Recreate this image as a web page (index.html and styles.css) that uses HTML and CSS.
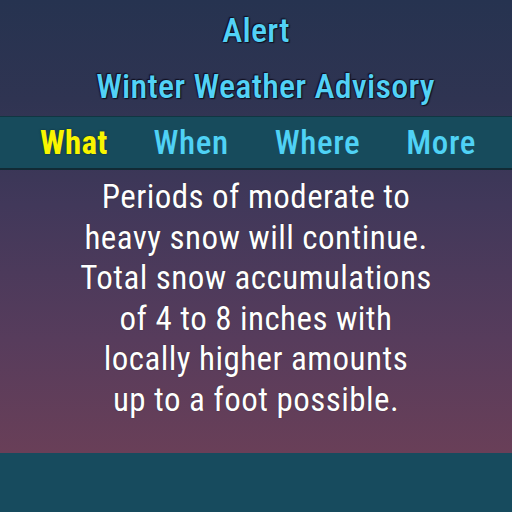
FILE: index.html
```html
<!DOCTYPE html>
<html>
<head>
<meta charset="utf-8">
<link rel="stylesheet" href="styles.css">
</head>
<body>
<div class="screen">
  <div class="main">
    <header class="head">
      <div class="title">Alert</div>
      <div class="subtitle">Winter Weather Advisory</div>
    </header>
    <nav class="tabs">
      <span class="tab active">What</span>
      <span class="tab">When</span>
      <span class="tab">Where</span>
      <span class="tab">More</span>
    </nav>
    <div class="body">
      <p class="text">Periods of moderate to<br>heavy snow will continue.<br>Total snow accumulations<br>of 4 to 8 inches with<br>locally higher amounts<br>up to a foot possible.</p>
    </div>
  </div>
  <footer class="foot"></footer>
</div>
</body>
</html>
```

FILE: styles.css
```css
html, body {
  margin: 0;
  padding: 0;
}
body {
  width: 512px;
  height: 512px;
  overflow: hidden;
  font-family: Roboto, "Liberation Sans", sans-serif;
}
.screen {
  width: 512px;
  height: 512px;
  display: flex;
  flex-direction: column;
}
.main {
  height: 453px;
  display: flex;
  flex-direction: column;
  background: linear-gradient(180deg, #263350 0%, #2f3452 22%, #41385a 45%, #573c5c 75%, #693f58 100%);
}
.head {
  height: 116px;
  display: flex;
  flex-direction: column;
  align-items: center;
}
.title, .subtitle {
  color: #52d2f6;
  font-size: 34px;
  font-stretch: 87.5%;
  font-weight: 500;
  letter-spacing: 0.25px;
  text-shadow: 0 0 2px #101020, 1px 1px 1px #101020, -1px -1px 1px #101020;
}
.title {
  margin-top: 11px;
  line-height: 38px;
}
.subtitle {
  margin-top: 18px;
  margin-left: 19px;
  line-height: 38px;
}
.tabs {
  height: 51px;
  background: #174b5c;
  border-top: 1px solid #103642;
  border-bottom: 2px solid #112a35;
  display: flex;
  justify-content: space-between;
  align-items: center;
  padding: 0 36px 0 40px;
}
.tab {
  color: #4fd2f5;
  font-size: 33px;
  font-weight: 500;
  font-stretch: 87.5%;
  letter-spacing: 0.6px;
  line-height: 50px;
}
.tab.active {
  color: #f8f500;
  font-weight: 700;
  letter-spacing: 0.2px;
  text-shadow: 0 0 2px #0a2a30;
}
.body {
  flex: 1;
  display: flex;
  justify-content: center;
}
.text {
  margin: 7px 0 0 0;
  color: #ffffff;
  font-size: 33px;
  font-stretch: 87.5%;
  font-weight: 400;
  letter-spacing: 0.45px;
  line-height: 40.5px;
  text-align: center;
  text-shadow: 0 0 1px #222;
}
.foot {
  flex: 1;
  background: #174b5e;
}
```
